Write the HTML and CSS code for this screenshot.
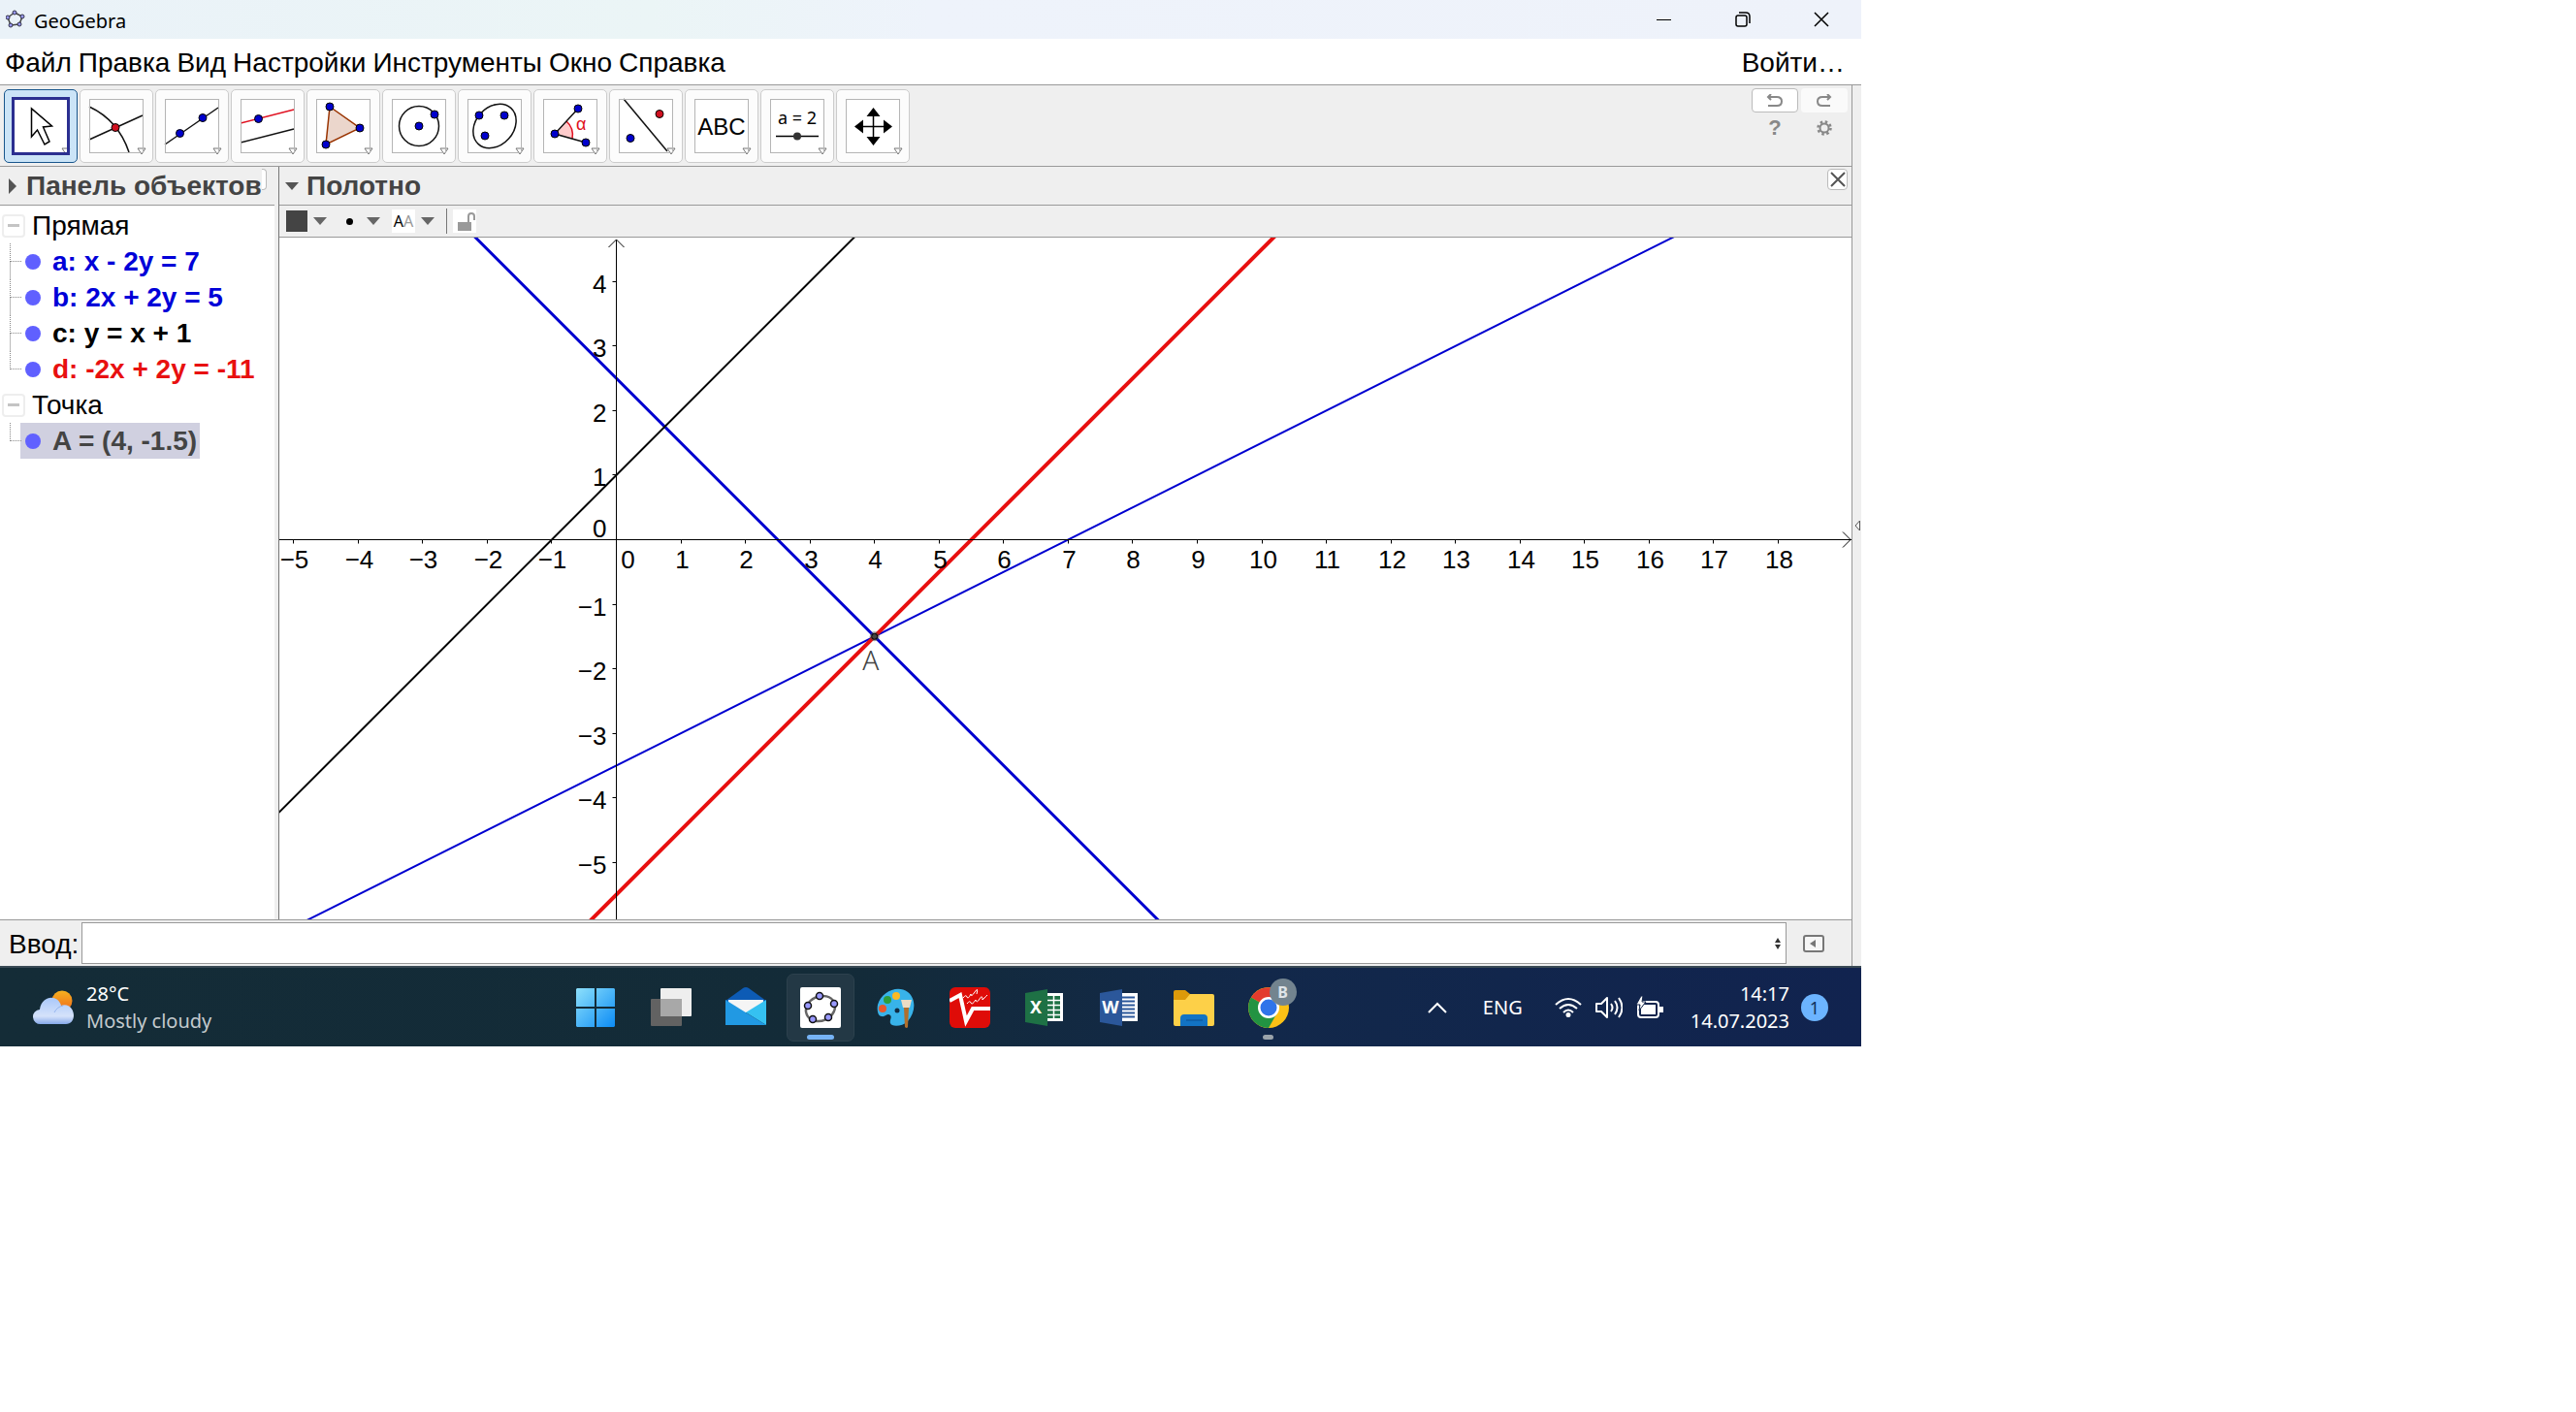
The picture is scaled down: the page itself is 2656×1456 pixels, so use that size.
FILE: index.html
```html
<!DOCTYPE html>
<html lang="ru">
<head>
    <meta charset="UTF-8">
    <meta name="viewport" content="width=device-width, initial-scale=1.0">
    <title>GeoGebra</title>
    <link rel="stylesheet" href="styles.css">
</head>
<body>
    <!-- shared symbols -->
    <svg class="defs" width="0" height="0" aria-hidden="true">
        <symbol id="drop" overflow="visible"><path d="M50 51h8l-4 6z" fill="#fff" stroke="#777"/></symbol>
        <symbol id="pt" overflow="visible"><circle r="4" fill="#00c" stroke="#000"/></symbol>
        <symbol id="rpt" overflow="visible"><circle r="4" fill="#d01020" stroke="#000"/></symbol>
    </svg>

    <div class="desktop">
        <header class="titlebar">
            <svg class="app-icon" width="20" height="20" viewBox="0 0 20 20"><path d="M9 3 17 7 14 15 5 16 2 8z" fill="none" stroke="#444" stroke-width="1.500"/><g fill="#99f" stroke="#334"><circle cx="9" cy="3" r="2"/><circle cx="17" cy="7" r="2"/><circle cx="14" cy="15" r="2"/><circle cx="5" cy="16" r="2"/><circle cx="2" cy="8" r="2"/></g></svg>
            <span class="app-name">GeoGebra</span>
            <button class="win-btn" aria-label="Minimize"><svg width="16" height="16"><path d="M0 8.500h15" stroke="#000"/></svg></button>
            <button class="win-btn" aria-label="Restore"><svg width="16" height="16" fill="none" stroke="#000" stroke-width="1.500"><rect x="1" y="4" width="11" height="11" rx="2"/><path d="M4 1h7q4 0 4 4v7"/></svg></button>
            <button class="win-btn" aria-label="Close"><svg width="16" height="16"><path d="M1 1l14 14M15 1L1 15" stroke="#000" stroke-width="1.500"/></svg></button>
        </header>

        <nav class="menu">
            <button>Файл</button>
            <button>Правка</button>
            <button>Вид</button>
            <button>Настройки</button>
            <button>Инструменты</button>
            <button>Окно</button>
            <button>Справка</button>
            <button class="login">Войти…</button>
        </nav>

        <div class="window">
            <main class="work">
                <div class="toolbar">
                    <button class="tool active" aria-label="Перемещать"><svg width="56" height="56"><path d="M18.500 10v29l6-7 7.500 15 5-3-6.500-15 9-1z" fill="#fff" stroke="#000" stroke-width="1.500"/><use href="#drop"/></svg></button>
                    <button class="tool" aria-label="Точка"><svg width="56" height="56"><path d="M0 8Q30 22 41 55M0 42 55 17" fill="none" stroke="#111" stroke-width="1.500"/><use href="#rpt" x="27" y="29.500"/><use href="#drop"/></svg></button>
                    <button class="tool" aria-label="Прямая"><svg width="56" height="56"><path d="M0 47 55 9" stroke="#111" stroke-width="1.500"/><use href="#pt" x="15.500" y="35.500"/><use href="#pt" x="39" y="19.500"/><use href="#drop"/></svg></button>
                    <button class="tool" aria-label="Параллельная прямая"><svg width="56" height="56"><path d="M0 25 55 11" stroke="#e01020" stroke-width="1.500"/><path d="M0 45 55 31" stroke="#111" stroke-width="1.500"/><use href="#pt" x="18.500" y="20.500"/><use href="#drop"/></svg></button>
                    <button class="tool" aria-label="Многоугольник"><svg width="56" height="56"><path d="M14 8 45 30 10 47z" fill="#ebd6cc" stroke="#993300" stroke-width="1.500"/><use href="#pt" x="14" y="8"/><use href="#pt" x="45" y="30"/><use href="#pt" x="10" y="47"/><use href="#drop"/></svg></button>
                    <button class="tool" aria-label="Окружность"><svg width="56" height="56"><circle cx="28" cy="28" r="20.500" fill="none" stroke="#111" stroke-width="1.500"/><use href="#pt" x="28" y="28"/><use href="#pt" x="44" y="16"/><use href="#drop"/></svg></button>
                    <button class="tool" aria-label="Эллипс"><svg width="56" height="56"><ellipse cx="28" cy="28" rx="25" ry="19.500" transform="rotate(-48 28 28)" fill="none" stroke="#111" stroke-width="1.500"/><use href="#pt" x="12" y="17"/><use href="#pt" x="38" y="17"/><use href="#pt" x="18" y="38"/><use href="#drop"/></svg></button>
                    <button class="tool" aria-label="Угол"><svg width="56" height="56"><path d="M12 36 24 23Q32 30 30 41z" fill="#fcc"/><path d="M24 23Q32 30 30 41" fill="none" stroke="#e01020" stroke-width="1.500"/><path d="M36 10 12 36 44 45" fill="none" stroke="#111" stroke-width="1.500"/><text x="34" y="32" class="alpha">α</text><use href="#pt" x="36" y="10"/><use href="#pt" x="12" y="36"/><use href="#pt" x="44" y="45"/><use href="#drop"/></svg></button>
                    <button class="tool" aria-label="Отражение"><svg width="56" height="56"><path d="M5 0 50 54" stroke="#111" stroke-width="1.500"/><use href="#rpt" x="42" y="15.500"/><use href="#pt" x="12" y="40.500"/><use href="#drop"/></svg></button>
                    <button class="tool" aria-label="Текст"><svg width="56" height="56"><text x="28" y="37" class="abc">ABC</text><use href="#drop"/></svg></button>
                    <button class="tool" aria-label="Ползунок"><svg width="56" height="56"><text x="28" y="26" class="param">a = 2</text><path d="M6 38.500h44" stroke="#000" stroke-width="1.500"/><circle cx="28" cy="38.500" r="4" fill="#333"/><use href="#drop"/></svg></button>
                    <button class="tool" aria-label="Переместить чертёж"><svg width="56" height="56"><path d="M28.500 14v30M14 28.500h30" stroke="#000" stroke-width="1.500"/><path d="M28.500 9l7 9h-14zM28.500 48l7-9h-14zM9 28.500l9-7v14zM48 28.500l-9-7v14z"/><use href="#drop"/></svg></button>

                    <div class="tool-side">
                        <button class="side-btn boxed" aria-label="Отменить"><svg width="18" height="14"><path d="M2 3h9q5 0 5 4.500t-5 4.500H2M5 0 2 3l3 3" fill="none" stroke="#888" stroke-width="2"/></svg></button>
                        <button class="side-btn faded" aria-label="Повторить"><svg width="18" height="14"><path d="M15 3H7q-5 0-5 4.500T7 12h8M12 0l3 3-3 3" fill="none" stroke="#888" stroke-width="2"/></svg></button>
                        <button class="side-btn help">?</button>
                        <button class="side-btn" aria-label="Настройки"><svg width="16" height="16" fill="none" stroke="#888"><circle cx="8" cy="8" r="4.500" stroke-width="2"/><circle cx="8" cy="8" r="6.500" stroke-width="2.500" stroke-dasharray="2.500 2.600"/></svg></button>
                    </div>
                </div>

                <div class="views">
                    <section class="algebra">
                        <div class="view-head">
                            <svg class="arrow" width="8" height="16"><path d="M0 0v16l8-8z" fill="#555"/></svg>
                            <h2>Панель объектов</h2>
                            <span class="cut-close"></span>
                        </div>
                        <div class="tree">
                            <div class="group"><button class="toggle" aria-label="Свернуть"></button>Прямая</div>
                            <ul>
                                <li class="blue"><span class="mark"></span>a: x - 2y = 7</li>
                                <li class="blue"><span class="mark"></span>b: 2x + 2y = 5</li>
                                <li><span class="mark"></span>c: y = x + 1</li>
                                <li class="red"><span class="mark"></span>d: -2x + 2y = -11</li>
                            </ul>
                            <div class="group"><button class="toggle" aria-label="Свернуть"></button>Точка</div>
                            <ul>
                                <li class="selected"><span class="mark"></span>A = (4, -1.5)</li>
                            </ul>
                        </div>
                    </section>

                    <section class="graphics">
                        <div class="view-head">
                            <svg class="arrow" width="14" height="8"><path d="M0 0h14l-7 8z" fill="#555"/></svg>
                            <h2>Полотно</h2>
                            <button class="close-view" aria-label="Закрыть"><svg width="16" height="16"><path d="M1 1l14 14M15 1L1 15" stroke="#555" stroke-width="2"/></svg></button>
                        </div>
                        <div class="stylebar">
                            <button class="style-btn" aria-label="Цвет"><span class="swatch"></span><span class="caret"></span></button>
                            <button class="style-btn" aria-label="Стиль точки"><span class="dot"></span><span class="caret"></span></button>
                            <button class="style-btn" aria-label="Стиль надписи"><span class="aa">A<i>A</i></span><span class="caret"></span></button>
                            <span class="rule"></span>
                            <button class="style-btn lock" aria-label="Закрепить"><svg width="24" height="24"><path d="M5 13h14v9H5z" fill="#999"/><path d="M16 13V7q0-3 3-3t3 3v4" fill="none" stroke="#999" stroke-width="2"/></svg></button>
                        </div>
                        <svg id="plot" class="plot" width="100%" height="703">
                            <g id="lines"></g>
                            <g id="axes"></g>
                        </svg>
                    </section>
                </div>

                <div class="inputbar">
                    <label for="cmd">Ввод:</label>
                    <div class="field">
                        <input id="cmd" type="text">
                        <svg width="6" height="12"><path d="M0 5l3-5 3 5zM0 7h6l-3 5z" fill="#333"/></svg>
                    </div>
                    <button class="input-help" aria-label="Список команд"><svg width="22" height="18"><rect x="1" y="1" width="20" height="16" rx="2" fill="#f6f6f6" stroke="#777" stroke-width="2"/><path d="M13 5v8l-6-4z" fill="#777"/></svg></button>
                </div>
            </main>
            <button class="edge" aria-label="Панель"><svg width="6" height="12"><path d="M5.500 1v10L1 6z" fill="#fff" stroke="#555"/></svg></button>
        </div>

        <footer class="taskbar">
            <div class="weather">
                <svg width="42" height="36" viewBox="0 0 42 36">
                    <defs>
                        <linearGradient id="sun" x2="0" y2="1"><stop stop-color="#f5b11f"/><stop offset="1" stop-color="#f06a1c"/></linearGradient>
                        <linearGradient id="cloud" x2="0" y2="1"><stop stop-color="#a9c8fa"/><stop offset=".7" stop-color="#d5e2fa"/><stop offset="1" stop-color="#86a9ea"/></linearGradient>
                    </defs>
                    <circle cx="30" cy="11" r="10.500" fill="url(#sun)"/>
                    <path d="M8 35a7.500 7.500 0 0 1-1-15C9 5 26 4 29 16c8-3 13 4 13 10 0 5-3 9-8 9z" fill="url(#cloud)"/>
                    <path d="M22 23q3-6 9-7" fill="none" stroke="#94b4ee"/>
                </svg>
                <div class="weather-text"><span>28°C</span><span class="muted">Mostly cloudy</span></div>
            </div>

            <div class="apps">
                <button class="app" aria-label="Start"><svg width="42" height="42" viewBox="0 0 42 42"><defs><linearGradient id="win" x2="1" y2="1"><stop stop-color="#8de0fb"/><stop offset="1" stop-color="#0c8cf5"/></linearGradient></defs><path d="M1 1h18v19H0V2zM21 1h18l1 1v18H21zM0 22h19v19H1l-1-1zM21 22h19v18l-1 1H21z" fill="url(#win)"/></svg></button>
                <button class="app" aria-label="Task view"><svg width="42" height="42" viewBox="0 0 42 42"><rect y="12" width="32" height="28" rx="1" fill="#626262"/><rect x="10" y="1" width="32" height="29" rx="1" fill="#eee"/><path d="M10 12h22v18H10z" fill="#a8a8a8"/></svg></button>
                <button class="app" aria-label="Mail"><svg width="42" height="42" viewBox="0 0 42 42"><path d="M0 14 18 1q3-2 6 0l18 13-6 8H6z" fill="#0d5bb5"/><path d="M3 13h36v13H3z" fill="#f5f5f5"/><path d="M42 13v26L21 26z" fill="#35c1f1"/><path d="M0 13l42 26H0z" fill="#2199e3"/></svg></button>
                <button class="app running" aria-label="GeoGebra"><svg width="42" height="42" viewBox="0 0 42 42"><rect width="42" height="42" rx="2" fill="#fff"/><ellipse cx="21" cy="22" rx="15.500" ry="12.500" transform="rotate(-25 21 22)" fill="none" stroke="#666" stroke-width="2.500"/><g fill="#99f" stroke="#111" stroke-width="1.500"><circle cx="20" cy="9" r="3.500"/><circle cx="35" cy="17" r="3.500"/><circle cx="29" cy="31" r="3.500"/><circle cx="13" cy="33" r="3.500"/><circle cx="8" cy="19" r="3.500"/></g></svg></button>
                <button class="app" aria-label="Paint"><svg width="42" height="42" viewBox="0 0 42 42"><path d="M3 18C7 4 24-3 34 5c9 7 8 21 0 30-6 6-17 6-18 2-1-3 2-6 0-8-3-3-5 2-9 1-4 0-5-7-4-12z" fill="#38b3ea"/><circle cx="8" cy="22" r="4" fill="#e8562c"/><circle cx="13" cy="13" r="4" fill="#2e9e3c"/><circle cx="22" cy="9" r="4" fill="#fbb924"/><circle cx="23" cy="24" r="2.500" fill="#112c44"/><path d="M30 21h5l-1 20q-1 2-3 0z" fill="#b06f2c"/><path d="M27 13h11l-2 8h-7z" fill="#ecdcc4"/></svg></button>
                <button class="app" aria-label="Video editor"><svg width="42" height="42" viewBox="0 0 42 42"><rect width="42" height="42" rx="6" fill="#df0c08"/><path d="M0 14 11 8l6 27 7-13h18" fill="none" stroke="#fff" stroke-width="4"/><path d="M14 11q3-4 4-1t4-3q0 4 4-2t2 2M18 17q3-4 4-1t5-3q1 4 4-1t3 1q4-4 5-5" fill="none" stroke="#fff"/></svg></button>
                <button class="app" aria-label="Excel"><svg width="42" height="42" viewBox="0 0 42 42"><path d="M22 6h18v29H22z" fill="#fff"/><path d="M24 9h13v23H24z" fill="#1e7145"/><path d="M22 13.500h16M22 18.500h16M22 23.500h16M22 28.500h16M30.500 8v25" stroke="#fff" stroke-width="1.500"/><path d="M1 6l23-4v38L1 36z" fill="#1e7145"/><text x="12" y="27" class="office">X</text></svg></button>
                <button class="app" aria-label="Word"><svg width="42" height="42" viewBox="0 0 42 42"><path d="M22 6h18v29H22z" fill="#fff"/><path d="M22 10.500h15M22 14.500h15M22 18.500h15M22 22.500h15M22 26.500h15M22 30.500h15" stroke="#2b579a" stroke-width="2"/><path d="M1 6l23-4v38L1 36z" fill="#2b579a"/><text x="12" y="27" class="office">W</text></svg></button>
                <button class="app" aria-label="Explorer"><svg width="42" height="42" viewBox="0 0 42 42"><path d="M0 5q0-2 2-2h10l5 4v10H0z" fill="#dd9a0a"/><path d="M0 13h12l5-6h23q2 0 2 2v29q0 2-2 2H2q-2 0-2-2z" fill="#fdd048"/><path d="M7 40V32q0-4 4-4h20q4 0 4 4v8z" fill="#1273c4"/><path d="M13 34h17" stroke="#0a4e90"/></svg></button>
                <button class="app" aria-label="Chrome">
                    <svg width="42" height="42" viewBox="0 0 42 42"><circle cx="21" cy="21" r="21" fill="#fbc116"/><path d="M21 21 3 10.500A21 21 0 0 1 39 10.500z" fill="#e33b2e"/><path d="M21 21 3 10.500A21 21 0 0 0 21 42l9-16z" fill="#229342"/><path d="M21 10.500h18" stroke="#e33b2e" stroke-width="2"/><circle cx="21" cy="21" r="11" fill="#fff"/><circle cx="21" cy="21" r="8.500" fill="#2f74ea"/></svg>
                    <span class="profile">B</span>
                    <span class="idle"></span>
                </button>
            </div>

            <div class="tray">
                <button aria-label="Hidden icons"><svg width="20" height="12"><path d="M1 11l9-9 9 9" fill="none" stroke="#fff" stroke-width="2"/></svg></button>
                <span class="lang">ENG</span>
                <div class="status">
                    <svg width="28" height="22" fill="none" stroke="#fff" stroke-width="2"><path d="M1 8q13-12 26 0M5 12q9-8 18 0M9 16q5-5 10 0"/><circle cx="14" cy="18.500" r="1.500" fill="#fff"/></svg>
                    <svg width="28" height="24" fill="none" stroke="#fff" stroke-width="2"><path d="M1 8h5l6-6v20l-6-6H1zM16 8q3 4 0 8M20 5q5 7 0 14M24 2q7 10 0 20" stroke-linejoin="round"/></svg>
                    <svg width="28" height="24"><rect x="2" y="6" width="21" height="16" rx="3" fill="none" stroke="#fff" stroke-width="2"/><path d="M5 9h15v10H5zM24 11h4v6h-4z" fill="#fff"/><path d="M5 0 0 9h4l-1 6 7-9H6l1-6z" fill="#fff" stroke="#12254a"/></svg>
                </div>
                <div class="clock"><span>14:17</span><span>14.07.2023</span></div>
                <span class="badge">1</span>
            </div>
        </footer>
    </div>

    <script>
        // origin and unit size of the drawing pad, in pixels
        const ox = 347.5, oy = 311.5, unit = 66.55;
        const NS = "http://www.w3.org/2000/svg";
        const px = x => ox + x * unit;
        const py = y => oy - y * unit;

        function add(parent, tag, attrs, text) {
            const el = document.createElementNS(NS, tag);
            for (const k in attrs) el.setAttribute(k, attrs[k]);
            if (text !== undefined) el.textContent = text;
            parent.appendChild(el);
            return el;
        }

        function label(n) {
            return n < 0 ? "−" + (-n) : String(n);
        }

        const axes = document.getElementById("axes");
        add(axes, "line", {x1: 0, y1: oy, x2: "100%", y2: oy, class: "axis"});
        add(axes, "line", {x1: ox, y1: 2, x2: ox, y2: "100%", class: "axis"});
        add(axes, "path", {d: `M${ox - 8} 10l8-8 8 8`, class: "axis"});
        const tip = add(axes, "svg", {x: "100%", y: oy, overflow: "visible"});
        add(tip, "path", {d: "M-9 -8l8 8-8 8", class: "axis"});

        for (let x = -5; x <= 18; x++) {
            if (x === 0) {
                add(axes, "text", {x: ox + 12, y: oy + 29, class: "x-label"}, "0");
                continue;
            }
            const tx = Math.floor(px(x)) + 0.5;
            add(axes, "line", {x1: tx, y1: oy, x2: tx, y2: oy + 4, class: "axis"});
            add(axes, "text", {x: tx + 1, y: oy + 29, class: "x-label"}, label(x));
        }
        for (let y = -5; y <= 4; y++) {
            if (y === 0) {
                add(axes, "text", {x: ox - 10, y: oy - 3, class: "y-label"}, "0");
                continue;
            }
            const ty = Math.floor(py(y)) + 0.5;
            add(axes, "line", {x1: ox - 4, y1: ty, x2: ox, y2: ty, class: "axis"});
            add(axes, "text", {x: ox - 10, y: ty + 11, class: "y-label"}, label(y));
        }

        // y = k*x + m
        const lines = document.getElementById("lines");
        const objects = [
            {name: "a", k: 0.5, m: -3.5},
            {name: "b", k: -1, m: 2.5},
            {name: "c", k: 1, m: 1},
            {name: "d", k: 1, m: -5.5}
        ];
        for (const o of objects) {
            add(lines, "line", {
                x1: px(-10), y1: py(o.k * -10 + o.m),
                x2: px(25), y2: py(o.k * 25 + o.m),
                class: "line-" + o.name
            });
        }
        add(lines, "circle", {cx: px(4), cy: py(-1.5), r: 5, class: "halo"});
        add(lines, "circle", {cx: px(4), cy: py(-1.5), r: 3, class: "point"});
        add(lines, "text", {x: px(4) - 4, y: py(-1.5) + 35, class: "point-name"}, "A");
    </script>
</body>
</html>
```
FILE: styles.css
```css
* {
    box-sizing: border-box;
}

body {
    margin: 0;
    background: #fff;
    color: #000;
    font-family: "Liberation Sans", Arial, sans-serif;
    font-size: 28px;
}

button {
    margin: 0;
    padding: 0;
    border: none;
    background: none;
    color: inherit;
    font: inherit;
}

svg {
    display: block;
    flex: none;
}

.defs {
    position: absolute;
}

.desktop {
    max-width: 1919px;
}

/* title bar */
.titlebar {
    display: flex;
    align-items: center;
    height: 40px;
    padding: 0 1px 0 6px;
    background: linear-gradient(90deg, #eaf2f8, #ebf5f6 35%, #eef3fb 50%, #eef2fa);
    font-family: "Noto Sans", sans-serif;
    font-size: 20px;
}

.app-name {
    flex: 1;
    margin-left: 9px;
    padding-top: 2px;
}

.win-btn {
    display: flex;
    align-items: center;
    justify-content: center;
    width: 81px;
    height: 40px;
}

/* menu */
.menu {
    display: flex;
    align-items: center;
    gap: 7px;
    height: 48px;
    padding: 2px 17px 0 5px;
    border-bottom: 1px solid #999;
}

.login {
    margin-left: auto;
}

.window {
    display: flex;
    background: #efefef;
}

.work {
    flex: 1;
    min-width: 0;
}

.edge {
    display: flex;
    align-items: center;
    justify-content: center;
    width: 10px;
    border-left: 1px solid #999;
}

/* toolbar */
.toolbar {
    display: flex;
    align-items: center;
    gap: 2px;
    height: 84px;
    padding: 0 4px;
    border-bottom: 1px solid #999;
}

.tool {
    display: flex;
    align-items: center;
    justify-content: center;
    width: 76px;
    height: 76px;
    border: 1px solid #ccc;
    border-radius: 5px;
    background: #fcfcfc;
}

.tool svg {
    background: #fff;
    outline: 1px solid #b5b5b5;
    outline-offset: -1px;
    overflow: visible;
}

.tool.active {
    border-color: #19568c;
    background: #cbe4f7;
}

.tool.active svg {
    outline: 3px solid #2b2f90;
}

.alpha {
    fill: #e01020;
    font-size: 18px;
}

.abc {
    font-size: 24px;
    text-anchor: middle;
}

.param {
    font-family: "Noto Sans", sans-serif;
    font-size: 18px;
    text-anchor: middle;
}

.tool-side {
    display: grid;
    grid-template-columns: 48px 48px;
    gap: 3px;
    align-self: flex-start;
    margin-top: 3px;
    margin-left: auto;
}

.side-btn {
    display: flex;
    align-items: center;
    justify-content: center;
    height: 25px;
    border-radius: 4px;
}

.boxed {
    border: 1px solid #bbb;
    background: #fff;
}

.faded {
    background: #fafafa;
}

.help {
    color: #888;
    font-size: 22px;
    font-weight: bold;
}

/* views */
.views {
    display: flex;
}

.algebra {
    display: flex;
    flex-direction: column;
    flex: none;
    width: 283px;
}

.graphics {
    flex: 1;
    min-width: 0;
    margin-left: 4px;
    border-left: 1px solid #777;
}

.view-head {
    display: flex;
    align-items: center;
    height: 40px;
    border-bottom: 1px solid #999;
    color: #444;
}

.view-head h2 {
    margin: 0;
    padding-top: 1px;
    font-size: 28px;
    white-space: nowrap;
}

.algebra .arrow {
    margin: 0 10px 0 9px;
}

.graphics .arrow {
    margin: 0 8px 0 6px;
}

.cut-close {
    align-self: flex-start;
    width: 5px;
    height: 22px;
    margin-top: 2px;
    border: 1px solid #bbb;
    border-left: none;
    border-radius: 0 4px 4px 0;
    background: #fff;
}

.close-view {
    display: flex;
    align-items: center;
    justify-content: center;
    align-self: flex-start;
    width: 21px;
    height: 22px;
    margin: 2px 4px 0 auto;
    border: 1px solid #bbb;
    border-radius: 4px;
    background: #fff;
}

.tree {
    flex: 1;
    padding-top: 2px;
    background: #fff;
    line-height: 39px;
}

.group {
    display: flex;
    align-items: center;
    height: 37px;
    padding-left: 2px;
}

.toggle {
    display: flex;
    align-items: center;
    justify-content: center;
    width: 24px;
    height: 24px;
    margin-right: 7px;
    border: 2px solid #eee;
    border-radius: 4px;
}

.toggle::before {
    content: '';
    width: 12px;
    height: 3px;
    background: #c4c4c4;
}

.tree ul {
    margin: 0 0 0 10px;
    padding: 0;
    list-style: none;
}

.tree li {
    display: flex;
    align-items: center;
    height: 37px;
    font-weight: bold;
    white-space: pre;
}

/* dotted branch in front of each object */
.tree li::before {
    content: '';
    align-self: flex-start;
    width: 11px;
    height: 18px;
    border-bottom: 1px dotted #888;
    border-left: 1px dotted #888;
}

.tree li:not(:last-child) {
    background: linear-gradient(#bbb, #bbb) 0 18px / 1px 19px no-repeat;
}

.mark {
    width: 16px;
    height: 16px;
    margin: 0 12px 0 4px;
    border-radius: 50%;
    background: #6060ff;
}

.blue {
    color: #0000d8;
}

.red {
    color: #e81010;
}

.tree .selected {
    width: 196px;
    background: linear-gradient(#d0d0e0, #d0d0e0) 11px 0 no-repeat;
    color: #444;
}

/* style bar */
.stylebar {
    display: flex;
    align-items: center;
    height: 33px;
    padding-left: 7px;
    border-bottom: 1px solid #999;
}

.style-btn {
    display: flex;
    align-items: center;
    gap: 6px;
    margin-right: 12px;
}

.swatch {
    width: 22px;
    height: 22px;
    background: #444;
}

.caret {
    border: 7px solid transparent;
    border-top: 8px solid #666;
    border-bottom: 0;
}

.dot {
    width: 7px;
    height: 7px;
    margin: 0 8px;
    border-radius: 50%;
    background: #000;
}

.aa {
    width: 24px;
    background: #fff;
    font-family: "Noto Sans", sans-serif;
    font-size: 16px;
    line-height: 24px;
    text-align: center;
}

.aa i {
    color: #999;
    font-style: normal;
}

.rule {
    width: 1px;
    height: 26px;
    margin-right: 6px;
    background: #777;
}

.lock {
    background: #fff;
}

/* drawing pad */
.plot {
    background: #fff;
    overflow: hidden;
}

.axis {
    fill: none;
    stroke: #000;
    stroke-width: 1;
}

.x-label,
.y-label {
    font-size: 26px;
}

.x-label {
    text-anchor: middle;
}

.y-label {
    text-anchor: end;
}

.line-a,
.line-b {
    stroke: #0000d0;
    stroke-width: 3;
}

.line-a {
    stroke-width: 2;
}

.line-c {
    stroke: #000;
    stroke-width: 2;
}

.line-d {
    stroke: #e81010;
    stroke-width: 4;
}

.halo {
    fill: #444;
    fill-opacity: 0.5;
}

.point {
    fill: #444;
    stroke: #000;
}

.point-name {
    fill: #444;
    font-family: "Noto Sans", sans-serif;
    font-size: 28px;
    font-weight: 300;
    text-anchor: middle;
}

/* input bar */
.inputbar {
    display: flex;
    align-items: center;
    height: 48px;
    padding-left: 9px;
    border-top: 1px solid #999;
}

.inputbar label {
    width: 75px;
    padding-top: 2px;
}

.field {
    display: flex;
    align-items: center;
    flex: 1;
    height: 43px;
    padding-right: 5px;
    border: 1px solid #999;
    background: #fff;
}

.field input {
    flex: 1;
    min-width: 0;
    height: 40px;
    border: none;
    outline: none;
    font: inherit;
}

.input-help {
    margin: 0 28px 0 17px;
}

/* taskbar */
.taskbar {
    display: grid;
    grid-template-columns: 1fr auto 1fr;
    align-items: center;
    height: 83px;
    border-top: 2px solid #3a4a55;
    background: linear-gradient(90deg, #142c37, #132b38 45%, #12284a 68%, #11234f);
    color: #fff;
    font-family: "Noto Sans", sans-serif;
    font-size: 20px;
    line-height: 28px;
}

.weather {
    display: flex;
    align-items: center;
    gap: 13px;
    padding-left: 34px;
}

.weather-text,
.clock {
    display: flex;
    flex-direction: column;
}

.muted {
    color: #c3cacd;
}

.apps {
    display: flex;
    gap: 7px;
    padding-left: 3px;
}

.app {
    position: relative;
    display: flex;
    align-items: center;
    justify-content: center;
    width: 70px;
    height: 70px;
    border-radius: 7px;
}

.running {
    border: 1px solid #2c414d;
    background: #233845;
}

.running::after {
    content: '';
    position: absolute;
    bottom: 1px;
    width: 28px;
    height: 5px;
    border-radius: 3px;
    background: #76b3f5;
}

.office {
    fill: #fff;
    font-size: 18px;
    font-weight: bold;
    text-anchor: middle;
}

.profile {
    position: absolute;
    top: 5px;
    right: 6px;
    width: 28px;
    height: 28px;
    border-radius: 50%;
    background: #73848f;
    color: #dfe4e8;
    font-size: 16px;
    font-weight: bold;
    text-align: center;
}

.idle {
    position: absolute;
    bottom: 2px;
    width: 11px;
    height: 5px;
    border-radius: 3px;
    background: #9aa3aa;
}

.tray {
    display: flex;
    align-items: center;
    justify-content: flex-end;
    padding-right: 34px;
}

.lang {
    margin: 0 33px 0 37px;
}

.status {
    display: flex;
    align-items: center;
    gap: 14px;
}

.clock {
    margin: 0 12px 0 28px;
    text-align: right;
}

.badge {
    width: 28px;
    height: 28px;
    border-radius: 50%;
    background: #6cb4ff;
    color: #10305a;
    font-size: 18px;
    text-align: center;
}
```
